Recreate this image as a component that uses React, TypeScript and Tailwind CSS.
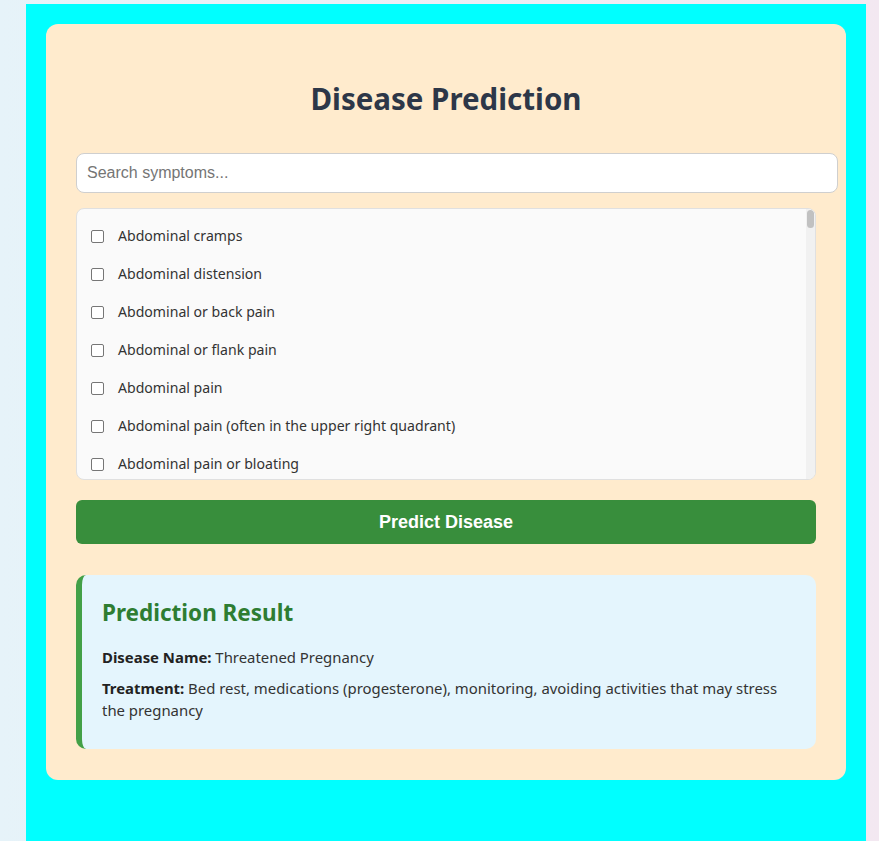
import React from "react";

const symptoms = [
  "Abdominal cramps",
  "Abdominal distension",
  "Abdominal or back pain",
  "Abdominal or flank pain",
  "Abdominal pain",
  "Abdominal pain (often in the upper right quadrant)",
  "Abdominal pain or bloating",
  "Abdominal swelling",
  "Abnormal bleeding",
  "Abnormal heart rhythm",
];

export default function App() {
  return (
    <div
      className="min-h-[841px] w-full bg-[linear-gradient(to_right,#e6f3f9,#f3e8f1)] pt-[4px] pl-[26px] pr-[13px]"
      style={{ fontFamily: '"Noto Sans", "Open Sans", sans-serif' }}
    >
      <div className="w-[840px] min-h-[837px] bg-[#00ffff] p-[20px]">
        <div className="w-[800px] rounded-[12px] bg-[#ffebcd] px-[30px] pt-[55px] pb-[31px]">
          <h1 className="text-center text-[29.5px] font-bold leading-[40px] text-[#2d3748]">
            Disease Prediction
          </h1>
          <input
            type="text"
            placeholder="Search symptoms..."
            className="mt-[34px] block h-[40px] w-[762px] rounded-[8px] border border-[#cfcfcf] bg-white px-[10px] text-[16px] text-[#333] placeholder:text-[#757575] outline-none"
            style={{ fontFamily: '"Liberation Sans", Arial, sans-serif' }}
          />
          <div className="relative mt-[15px] h-[272px] w-[740px] overflow-hidden rounded-[8px] border border-[#e0e0e0] bg-[#fafafa]">
            <div className="pt-[8px] pl-[14px]">
              {symptoms.map((s) => (
                <label key={s} className="flex h-[38px] items-center text-[14.1px] text-[#333]">
                  <input
                    type="checkbox"
                    className="m-0 h-[13px] w-[13px] appearance-none rounded-[2px] border border-[#767676] bg-white"
                  />
                  <span className="ml-[14px]">{s}</span>
                </label>
              ))}
            </div>
            <div className="absolute right-0 top-0 h-full w-[9px] bg-[#f1f1f1]">
              <div className="mx-auto mt-[1px] h-[18px] w-[7px] rounded-[4px] bg-[#c1c1c1]" />
            </div>
          </div>
          <button
            className="mt-[20px] flex h-[44px] w-[740px] items-center justify-center rounded-[6px] bg-[#388e3c] text-[18px] font-bold text-white"
            style={{ fontFamily: '"Liberation Sans", Arial, sans-serif' }}
          >
            Predict Disease
          </button>
          <div className="mt-[31px] w-[740px] rounded-[10px] border-l-[6px] border-[#43a047] bg-[#e4f5fd] pl-[20px] pr-[20px] pt-[23px] pb-[28px]">
            <h2 className="text-[22.5px] font-bold leading-[30px] text-[#2e7d32]">Prediction Result</h2>
            <p className="mt-[18px] text-[14.9px] leading-[22px] text-[#333]">
              <strong className="font-bold text-[#222]">Disease Name:</strong> Threatened Pregnancy
            </p>
            <p className="mt-[9px] text-[14.9px] leading-[22px] text-[#333]">
              <strong className="font-bold text-[#222]">Treatment:</strong> Bed rest, medications (progesterone), monitoring, avoiding activities that may stress the pregnancy
            </p>
          </div>
        </div>
      </div>
    </div>
  );
}
